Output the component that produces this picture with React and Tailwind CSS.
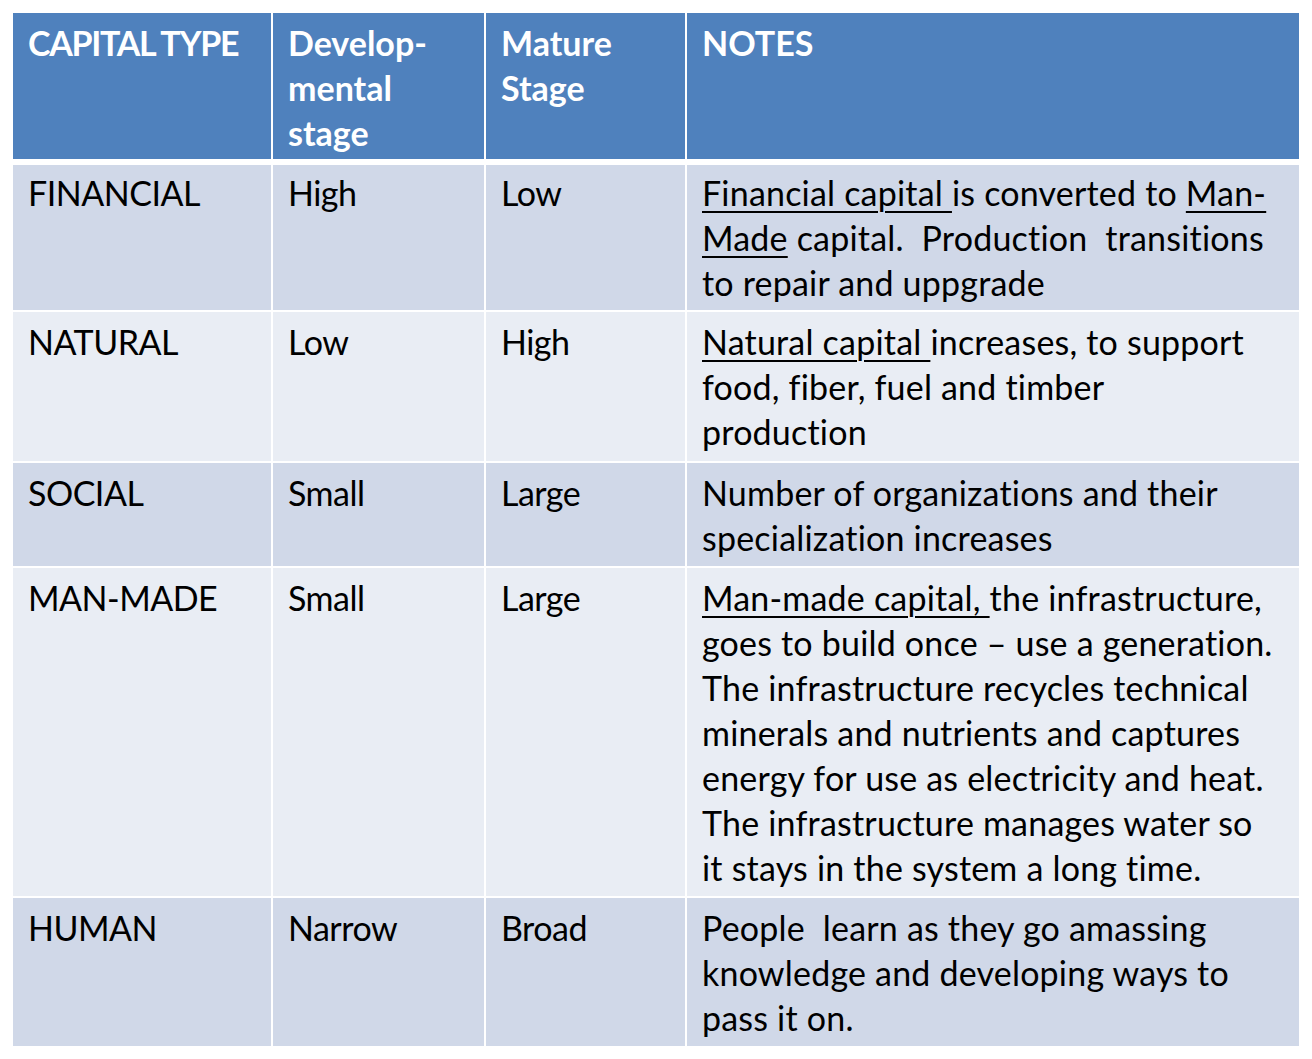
const COLS = "grid grid-cols-[258px_211px_199px_612px] gap-x-[2px]";
const FONT = { fontFamily: "Lato, 'Open Sans', sans-serif" };

const U = ({ children }) => (
  <span className="underline decoration-[2px] underline-offset-[5px]">{children}</span>
);

const rows = [
  {
    h: "h-[145px]",
    pt: "pt-[5px]",
    bg: "bg-[#d0d8e8]",
    cells: ["FINANCIAL", "High", "Low"],
    notes: (
      <>
        <U>Financial capital </U>is converted to <U>Man-</U>
        <br />
        <U>Made</U> capital.{"  "}Production{"  "}transitions
        <br />
        to repair and uppgrade
      </>
    ),
  },
  {
    h: "h-[149px]",
    pt: "pt-[7px]",
    bg: "bg-[#e9edf4]",
    cells: ["NATURAL", "Low", "High"],
    notes: (
      <>
        <U>Natural capital </U>increases, to support
        <br />
        food, fiber, fuel and timber
        <br />
        production
      </>
    ),
  },
  {
    h: "h-[103px]",
    pt: "pt-[7px]",
    bg: "bg-[#d0d8e8]",
    cells: ["SOCIAL", "Small", "Large"],
    notes: (
      <>
        Number of organizations and their
        <br />
        specialization increases
      </>
    ),
  },
  {
    h: "h-[328px]",
    pt: "pt-[7px]",
    bg: "bg-[#e9edf4]",
    cells: ["MAN-MADE", "Small", "Large"],
    notes: (
      <>
        <U>Man-made capital, </U>the infrastructure,
        <br />
        goes to build once – use a generation.
        <br />
        The infrastructure recycles technical
        <br />
        minerals and nutrients and captures
        <br />
        energy for use as electricity and heat.
        <br />
        The infrastructure manages water so
        <br />
        it stays in the system a long time.
      </>
    ),
  },
  {
    h: "h-[148px]",
    pt: "pt-[7px]",
    bg: "bg-[#d0d8e8]",
    cells: ["HUMAN", "Narrow", "Broad"],
    notes: (
      <>
        People{"  "}learn as they go amassing
        <br />
        knowledge and developing ways to
        <br />
        pass it on.
      </>
    ),
  },
];

const Cell = ({ className, children }) => (
  <div className={`pl-[15px] pr-[4px] ${className}`}>{children}</div>
);

export default function App() {
  return (
    <div
      className="w-[1312px] h-[1059px] bg-white pt-[13px] pl-[13px] [font-variant-ligatures:none]"
      style={FONT}
    >
      {/* header row */}
      <div className={`${COLS} h-[146px] text-[34px] leading-[45px] font-bold text-white`}>
        <Cell className="bg-[#4f81bd] pt-[7px] tracking-[-1.3px]">CAPITAL TYPE</Cell>
        <Cell className="bg-[#4f81bd] pt-[7px]">
          Develop-
          <br />
          mental
          <br />
          stage
        </Cell>
        <Cell className="bg-[#4f81bd] pt-[7px]">
          Mature
          <br />
          Stage
        </Cell>
        <Cell className="bg-[#4f81bd] pt-[7px]">NOTES</Cell>
      </div>

      <div className="mt-[6px] flex flex-col gap-y-[2px] text-[34px] leading-[45px] text-black">
        {rows.map((r) => (
          <div key={r.cells[0]} className={`${COLS} ${r.h}`}>
            {r.cells.map((c) => (
              <Cell key={c} className={`${r.bg} ${r.pt} tracking-[-0.5px]`}>
                {c}
              </Cell>
            ))}
            <Cell className={`${r.bg} ${r.pt} whitespace-pre tracking-[0.2px]`}>{r.notes}</Cell>
          </div>
        ))}
      </div>
    </div>
  );
}
